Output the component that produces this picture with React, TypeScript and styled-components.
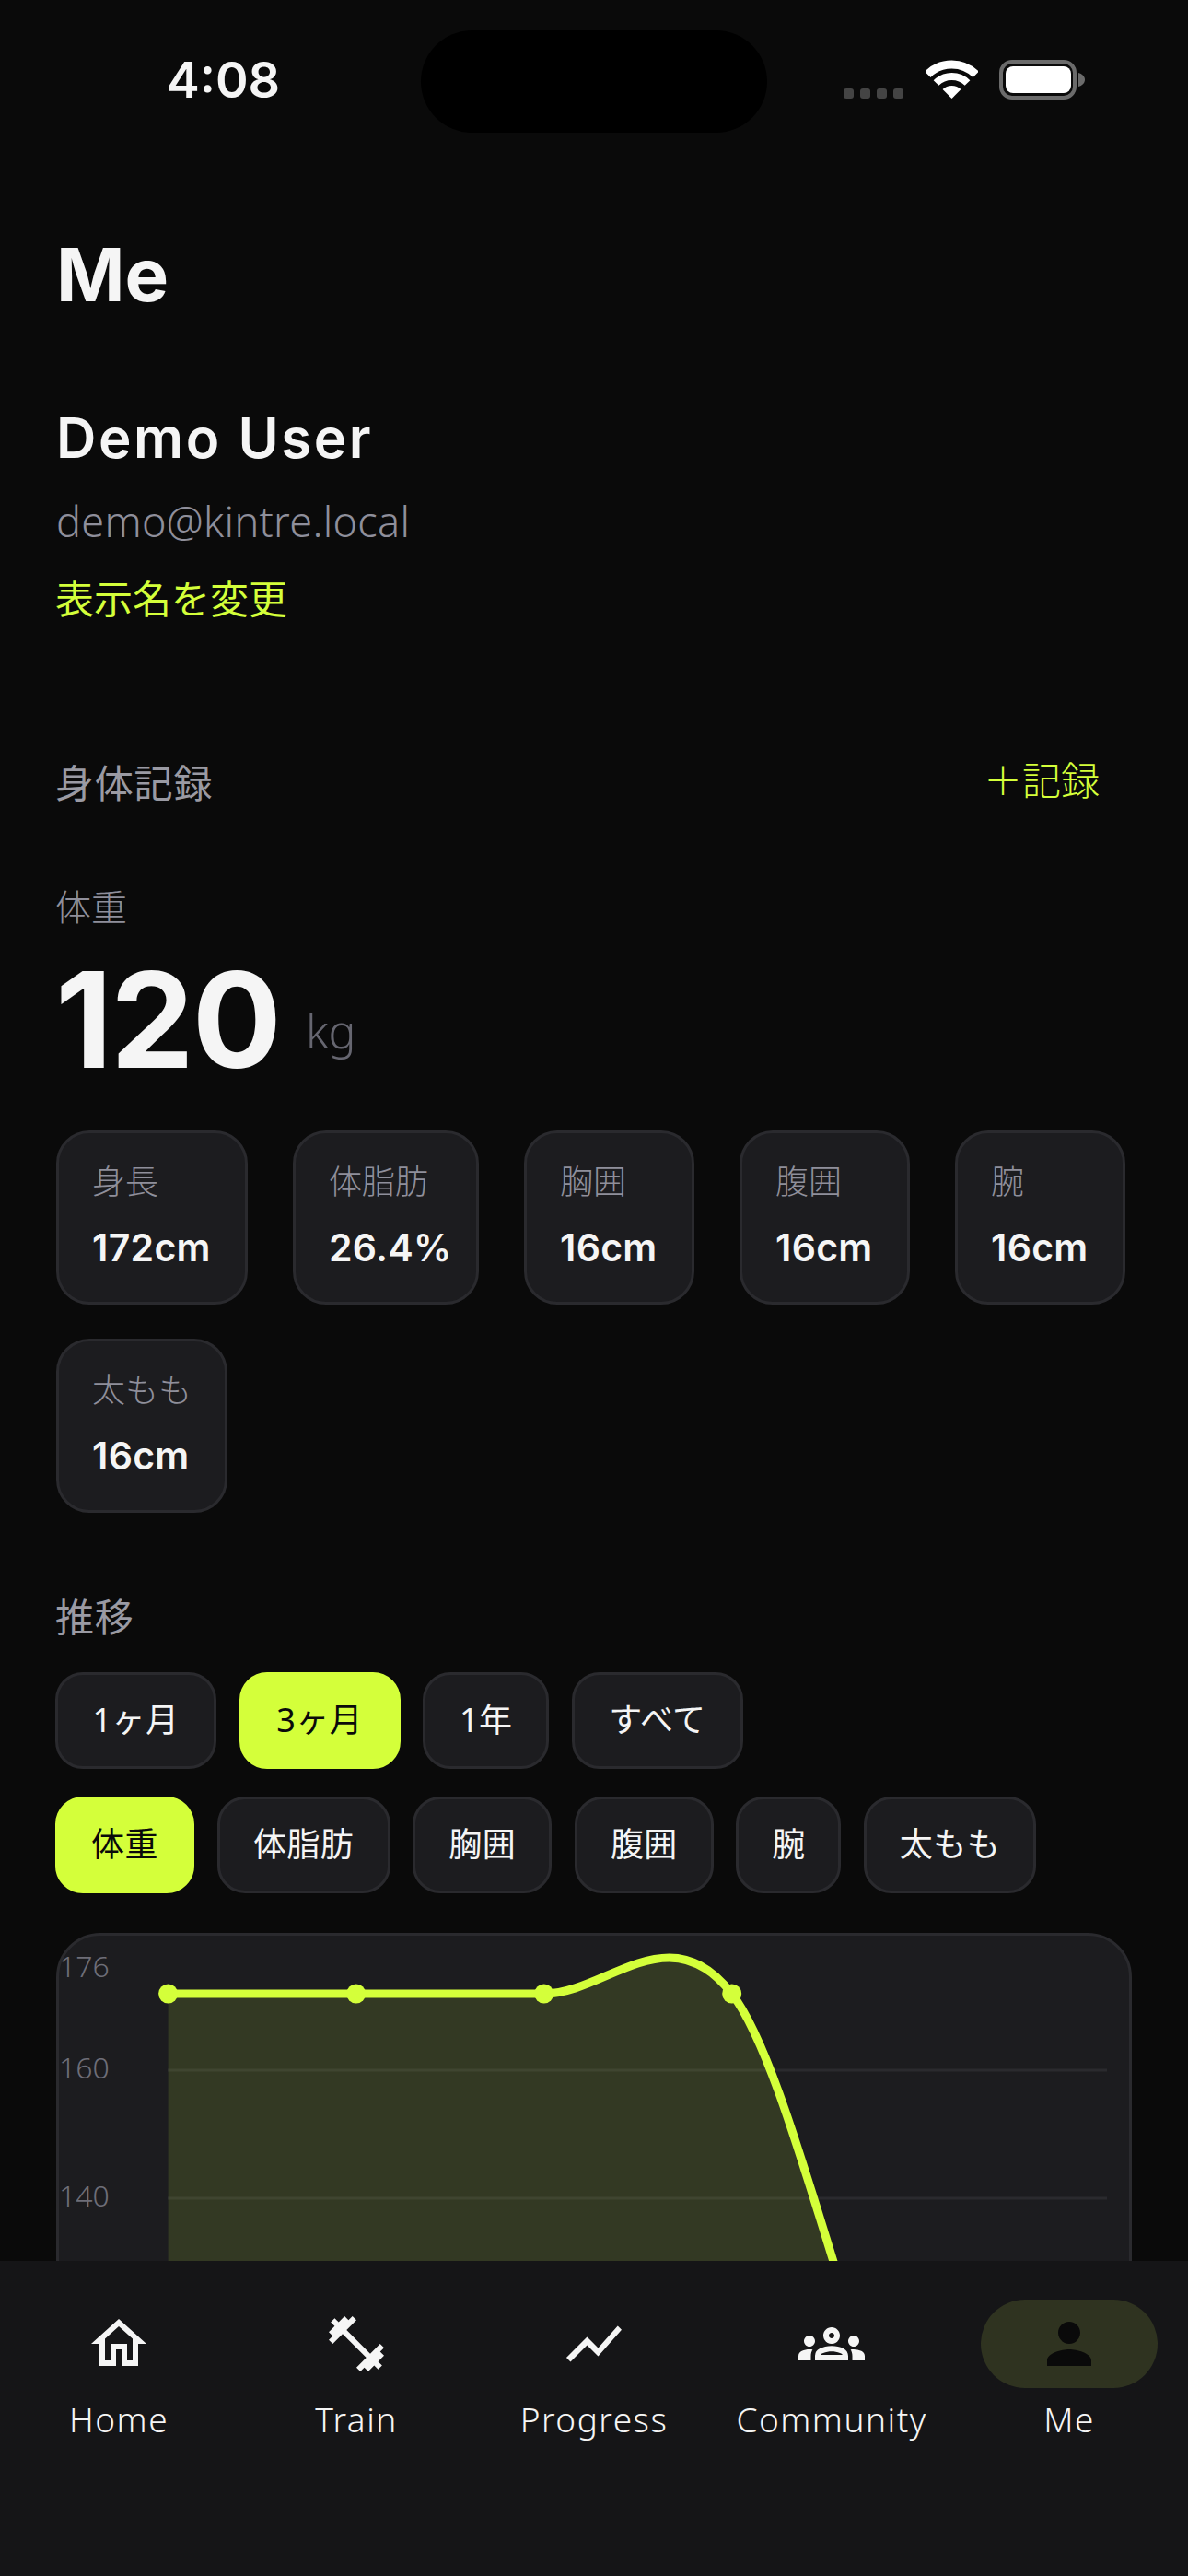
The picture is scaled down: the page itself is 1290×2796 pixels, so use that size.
import React from "react";
import styled, { createGlobalStyle } from "styled-components";
import { MdFitnessCenter, MdOutlineGroups, MdOutlineHome, MdPerson, MdShowChart } from "react-icons/md";

const ACCENT = "#d4ff3a";
const TEXT = "#f5f5f5";
const JP = `"Noto Sans CJK JP"`;
const BODY = `"Noto Sans", ${JP}, sans-serif`;
const DISPLAY = `"Inter", ${JP}, sans-serif`;

const GlobalStyle = createGlobalStyle`
  html, body {
    margin: 0;
    padding: 0;
    background: #0a0a0a;
  }
  #root {
    height: 2796px;
    overflow: hidden;
  }
`;

const Screen = styled.div`
  position: relative;
  width: 1290px;
  height: 2796px;
  overflow: hidden;
  background: #0a0a0a;
  color: ${TEXT};
  font-family: ${BODY};
`;

const StatusBar = styled.div`
  display: grid;
  grid-template-columns: 457px 376px 1fr;
  padding-top: 33px;
  height: 111px;
`;

const Time = styled.div`
  font-family: ${DISPLAY};
  font-size: 54px;
  font-weight: 600;
  line-height: 108px;
  text-align: center;
  padding-left: 28px;
`;

const Island = styled.div`
  height: 111px;
  border-radius: 56px;
  background: #000;
`;

const StatusIcons = styled.div`
  display: flex;
  align-items: flex-start;
  padding: 32px 0 0 83px;
`;

const SignalDots = styled.div`
  display: flex;
  gap: 7px;
  margin: 31px 24px 0 0;
`;

const SignalDot = styled.span`
  width: 11px;
  height: 11px;
  border-radius: 3px;
  background: #444;
`;

const WifiIcon = styled.svg`
  width: 57px;
  height: 42px;
  margin-right: 23px;
`;

const BatteryIcon = styled.svg`
  width: 93px;
  height: 43px;
`;

const Content = styled.main`
  padding: 114px 60px 0;
`;

const PageTitle = styled.h1`
  margin: 0 0 0 1px;
  font-family: ${DISPLAY};
  font-size: 80px;
  font-weight: 700;
  line-height: 80px;
`;

const UserName = styled.div`
  margin: 101px 0 0 1px;
  font-family: ${DISPLAY};
  font-size: 60px;
  font-weight: 600;
  line-height: 72px;
  letter-spacing: 2.6px;
`;

const Email = styled.div`
  margin: 25px 0 0 1px;
  font-size: 45px;
  font-weight: 300;
  line-height: 60px;
  letter-spacing: 0.3px;
  color: #8f8f9b;
`;

const TextLink = styled.div`
  margin-top: 24px;
  font-size: 42px;
  line-height: 60px;
  color: ${ACCENT};
`;

const SectionHead = styled.div`
  display: flex;
  justify-content: space-between;
  align-items: center;
  height: 60px;
  margin-top: 140px;
  padding-right: 36px;
`;

const SectionTitle = styled.h2`
  margin: 0;
  font-size: 42px;
  font-weight: 400;
  line-height: 60px;
  letter-spacing: 0.8px;
  color: #9a9aa3;
`;

const AddLink = styled.div`
  margin-bottom: 6px;
  font-size: 42px;
  font-weight: 300;
  line-height: 60px;
  color: ${ACCENT};
`;

const MetricLabel = styled.div`
  margin-top: 76px;
  font-size: 39px;
  font-weight: 300;
  line-height: 56px;
  color: #8f8f9b;
`;

const BigValue = styled.div`
  display: flex;
  align-items: flex-end;
  gap: 28px;
  margin-top: 23px;
  font-family: ${DISPLAY};
`;

const BigNumber = styled.span`
  font-size: 144px;
  font-weight: 700;
  line-height: 144px;
  letter-spacing: -2px;
`;

const BigUnit = styled.span`
  margin-bottom: 33px;
  font-family: ${BODY};
  font-size: 50px;
  font-weight: 300;
  line-height: 54px;
  color: #666670;
`;

const StatGrid = styled.div`
  display: flex;
  flex-wrap: wrap;
  gap: 37px 49px;
  margin: 48px 0 0 1px;
`;

const StatCard = styled.div<{ $width: number }>`
  box-sizing: border-box;
  width: ${(p) => p.$width}px;
  height: 189px;
  padding: 25px 0 0 36px;
  border: 3px solid #2a2a2e;
  border-radius: 36px;
  background: #1c1c1f;
`;

const StatLabel = styled.div`
  font-size: 36px;
  font-weight: 300;
  line-height: 56px;
  color: #8f8f9b;
`;

const StatValue = styled.div`
  margin-top: 15px;
  font-family: ${DISPLAY};
  font-size: 41px;
  font-weight: 600;
  line-height: 56px;
  letter-spacing: 0.3px;
  white-space: nowrap;
`;

const TrendTitle = styled(SectionTitle)`
  margin-top: 83px;
`;

const ChipRow = styled.div<{ $top: number }>`
  display: flex;
  gap: 24.6px;
  margin-top: ${(p) => p.$top}px;
`;

const Chip = styled.div<{ $width: number; $active?: boolean }>`
  box-sizing: border-box;
  display: flex;
  align-items: center;
  justify-content: center;
  width: ${(p) => p.$width}px;
  height: 105px;
  padding-bottom: 6px;
  border: 3px solid ${(p) => (p.$active ? ACCENT : "#2a2a2e")};
  border-radius: 30px;
  background: ${(p) => (p.$active ? ACCENT : "#1c1c1f")};
  color: ${(p) => (p.$active ? "#0a0a0a" : TEXT)};
  font-size: 36px;
  font-weight: 400;
  letter-spacing: 0.4px;
  white-space: nowrap;
`;

const ChartCard = styled.div`
  box-sizing: border-box;
  width: 1168px;
  height: 560px;
  margin: 43px 0 0 1px;
  border: 3px solid #2a2a2e;
  border-radius: 48px;
  background: #1c1c1f;
  overflow: hidden;
`;

const ChartSvg = styled.svg`
  display: block;
`;

const AxisLabel = styled.text`
  font-family: ${BODY};
  font-size: 32px;
  font-weight: 300;
  fill: #6e6e78;
`;

const TabBar = styled.nav`
  position: absolute;
  left: 0;
  right: 0;
  bottom: 0;
  height: 342px;
  display: grid;
  grid-template-columns: repeat(5, 1fr);
  padding-top: 42px;
  box-sizing: border-box;
  background: #151517;
`;

const Tab = styled.div`
  display: flex;
  flex-direction: column;
  align-items: center;
`;

const TabIcon = styled.div<{ $active?: boolean }>`
  display: flex;
  align-items: center;
  justify-content: center;
  width: 192px;
  height: 96px;
  border-radius: 48px;
  background: ${(p) => (p.$active ? "#2f3320" : "transparent")};
  color: ${(p) => (p.$active ? "#0a0a0a" : TEXT)};
`;

const TabLabel = styled.div`
  margin-top: 8px;
  font-size: 37px;
  font-weight: 300;
  line-height: 52px;
  letter-spacing: 1.5px;
  color: ${TEXT};
`;

const stats = [
  { label: "身長", value: "172cm", width: 208 },
  { label: "体脂肪", value: "26.4%", width: 202 },
  { label: "胸囲", value: "16cm", width: 185 },
  { label: "腹囲", value: "16cm", width: 185 },
  { label: "腕", value: "16cm", width: 185 },
  { label: "太もも", value: "16cm", width: 186 },
];

const ranges = [
  { label: "1ヶ月", width: 175 },
  { label: "3ヶ月", width: 175, active: true },
  { label: "1年", width: 137 },
  { label: "すべて", width: 186 },
];

const metrics = [
  { label: "体重", width: 151, active: true },
  { label: "体脂肪", width: 188 },
  { label: "胸囲", width: 151 },
  { label: "腹囲", width: 151 },
  { label: "腕", width: 114 },
  { label: "太もも", width: 187 },
];

const tabs = [
  { label: "Home", icon: MdOutlineHome },
  { label: "Train", icon: MdFitnessCenter },
  { label: "Progress", icon: MdShowChart },
  { label: "Community", icon: MdOutlineGroups },
  { label: "Me", icon: MdPerson, active: true },
];

const linePath =
  "M182.6 63 L590.7 63 C658.7 63 726.7 -25 794.7 63 C862.7 151 930.7 503 998.7 591";
const dots = [182.6, 386.7, 590.7, 794.7];

// chart coordinates start at the card's inner corner
const Chart = () => (
  <ChartSvg width="1162" height="554" viewBox="0 0 1162 554">
    <line x1="118" x2="1138" y1="146" y2="146" stroke="#2a2a2e" strokeWidth="3" />
    <line x1="118" x2="1138" y1="285" y2="285" stroke="#2a2a2e" strokeWidth="3" />
    <g transform="translate(-64 0)">
      <path d={`${linePath} L182.6 591 Z`} fill={ACCENT} fillOpacity="0.13" />
      <path d={linePath} fill="none" stroke={ACCENT} strokeWidth="9" />
      {dots.map((x) => (
        <circle key={x} cx={x} cy="63" r="10.5" fill={ACCENT} />
      ))}
    </g>
    <AxisLabel x="0" y="45">176</AxisLabel>
    <AxisLabel x="0" y="155">160</AxisLabel>
    <AxisLabel x="0" y="294">140</AxisLabel>
  </ChartSvg>
);

export default function App() {
  return (
    <Screen>
      <GlobalStyle />
      <StatusBar>
        <Time>4:08</Time>
        <Island />
        <StatusIcons>
          <SignalDots>
            <SignalDot />
            <SignalDot />
            <SignalDot />
            <SignalDot />
          </SignalDots>
          <WifiIcon viewBox="0 0 57 42">
            <path d="M2.3 15.8A37 37 0 0 1 54.7 15.8" fill="none" stroke="#fff" strokeWidth="9" />
            <path d="M11.5 25A24 24 0 0 1 45.5 25" fill="none" stroke="#fff" strokeWidth="8" />
            <path d="M28.5 42L18.6 32.1A14 14 0 0 1 38.4 32.1Z" fill="#fff" />
          </WifiIcon>
          <BatteryIcon viewBox="0 0 93 43">
            <rect x="2" y="2" width="80" height="39" rx="12" fill="none" stroke="#6b6b6b" strokeWidth="4" />
            <rect x="7" y="7" width="71" height="29" rx="8" fill="#fff" />
            <path d="M86 14C90 15 93 18 93 21.5C93 25 90 28 86 29Z" fill="#6b6b6b" />
          </BatteryIcon>
        </StatusIcons>
      </StatusBar>

      <Content>
        <PageTitle>Me</PageTitle>
        <UserName>Demo User</UserName>
        <Email>demo@kintre.local</Email>
        <TextLink>表示名を変更</TextLink>

        <SectionHead>
          <SectionTitle>身体記録</SectionTitle>
          <AddLink>＋記録</AddLink>
        </SectionHead>

        <MetricLabel>体重</MetricLabel>
        <BigValue>
          <BigNumber>120</BigNumber>
          <BigUnit>kg</BigUnit>
        </BigValue>

        <StatGrid>
          {stats.map((s) => (
            <StatCard key={s.label} $width={s.width}>
              <StatLabel>{s.label}</StatLabel>
              <StatValue>{s.value}</StatValue>
            </StatCard>
          ))}
        </StatGrid>

        <TrendTitle>推移</TrendTitle>
        <ChipRow $top={30}>
          {ranges.map((r) => (
            <Chip key={r.label} $width={r.width} $active={r.active}>
              {r.label}
            </Chip>
          ))}
        </ChipRow>
        <ChipRow $top={30}>
          {metrics.map((m) => (
            <Chip key={m.label} $width={m.width} $active={m.active}>
              {m.label}
            </Chip>
          ))}
        </ChipRow>
        <ChartCard>
          <Chart />
        </ChartCard>
      </Content>

      <TabBar>
        {tabs.map((t) => (
          <Tab key={t.label}>
            <TabIcon $active={t.active}>
              <t.icon size={72} />
            </TabIcon>
            <TabLabel>{t.label}</TabLabel>
          </Tab>
        ))}
      </TabBar>
    </Screen>
  );
}
